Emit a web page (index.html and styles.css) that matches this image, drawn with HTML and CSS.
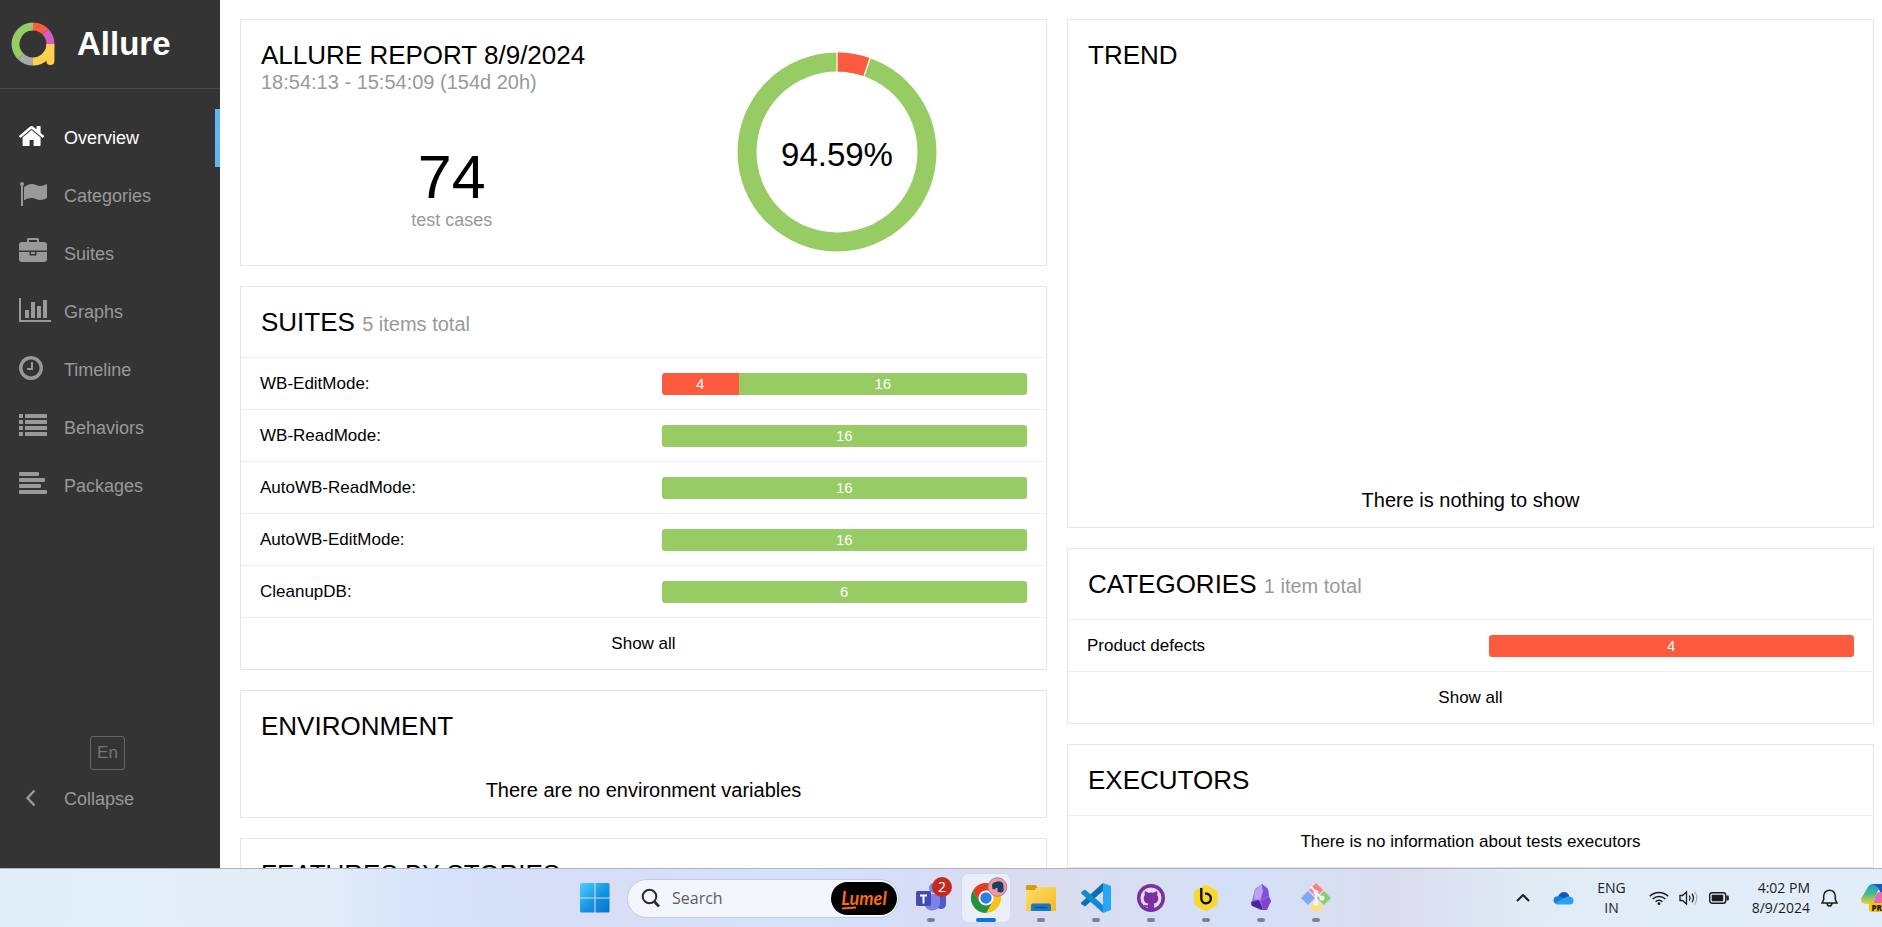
FILE: index.html
```html
<!DOCTYPE html>
<html lang="en">
<head>
<meta charset="utf-8">
<title>Allure Report</title>
<link rel="stylesheet" href="styles.css">
</head>
<body>
<div class="app">
  <aside class="side">
    <div class="brand">
      <svg class="brand-logo" viewBox="0 0 44 44" fill="none" stroke-width="8">
        <path d="M9.7 34.3A17.4 17.4 0 0 1 22 4.600" stroke="#97cc64"/>
        <path d="M22 4.600A17.400 17.400 0 0 1 34.300 9.700" stroke="#fd5a3e"/>
        <path d="M34.300 9.700A17.400 17.400 0 0 1 39.400 22" stroke="#d35ebe"/>
        <path d="M22 39.400A17.400 17.400 0 0 1 9.700 34.300" stroke="#aaa"/>
        <path d="M39.400 22A17.400 17.400 0 0 1 22 39.400" stroke="#ffd050"/>
        <path d="M35.400 22h8v17a4 4 0 0 1-8 0z" fill="#ffd050" stroke="none"/>
      </svg>
      <span class="brand-name">Allure</span>
    </div>
    <nav class="nav">
      <a class="nav-item nav-item-active" href="#">
        <svg class="nav-icon" viewBox="90 0 1792 2048"><path d="M1472 992v480q0 26-19 45t-45 19h-384v-384h-256v384h-384q-26 0-45-19t-19-45v-480q0-1 .5-3t.5-3l575-474 575 474q1 2 1 6zm223-69l-62 74q-8 9-21 11h-3q-13 0-21-7l-692-577-692 577q-12 8-24 7-13-2-21-11l-62-74q-8-10-7-23.500t11-21.500l719-599q32-26 76-26t76 26l244 204v-195q0-14 9-23t23-9h192q14 0 23 9t9 23v408l219 182q10 8 11 21.500t-7 23.500z"/></svg>
        <span>Overview</span></a>
      <a class="nav-item" href="#">
        <svg class="nav-icon" viewBox="0 0 28 32"><circle cx="3" cy="4" r="2"/><path d="M2 4h2v22H2zM5 7c3-2 5-3 8-3s5 2 8 2 4.500-.8 6-1.700c.6-.3 1-.1 1 .5V18c-2 1.300-4 2-7 2s-5-2-8-2-5 .8-8 2.300z"/></svg>
        <span>Categories</span></a>
      <a class="nav-item" href="#">
        <svg class="nav-icon" viewBox="0 0 1792 2048"><path d="M640 256h512v-128h-512v128zm1152 640v480q0 66-47 113t-113 47h-1472q-66 0-113-47t-47-113v-480h672v160q0 26 19 45t45 19h320q26 0 45-19t19-45v-160h672zm-768 0v128h-256v-128h256zm768-480v384h-1792v-384q0-66 47-113t113-47h352v-160q0-40 28-68t68-28h576q40 0 68 28t28 68v160h352q66 0 113 47t47 113z"/></svg>
        <span>Suites</span></a>
      <a class="nav-item" href="#">
        <svg class="nav-icon" viewBox="0 0 28 32"><path d="M0 2h2v22h30v2H0zM6 14h4v8H6zM12 6h4v16h-4zM18 10h4v12h-4zM24 4h4v18h-4z"/></svg>
        <span>Graphs</span></a>
      <a class="nav-item" href="#">
        <svg class="nav-icon" viewBox="128 0 1792 2048"><path d="M1024 544v448q0 14-9 23t-23 9h-320q-14 0-23-9t-9-23v-64q0-14 9-23t23-9h224v-352q0-14 9-23t23-9h64q14 0 23 9t9 23zm416 352q0-148-73-273t-198-198-273-73-273 73-198 198-73 273 73 273 198 198 273 73 273-73 198-198 73-273zm224 0q0 209-103 385.500t-279.500 279.500-385.500 103-385.500-103-279.500-279.500-103-385.500 103-385.500 279.500-279.500 385.500-103 385.500 103 279.500 279.500 103 385.500z"/></svg>
        <span>Timeline</span></a>
      <a class="nav-item" href="#">
        <svg class="nav-icon" viewBox="0 0 28 32"><path d="M0 2h4v4H0zM6 2h22v4H6zM0 8h4v4H0zM6 8h22v4H6zM0 14h4v4H0zM6 14h22v4H6zM0 20h4v4H0zM6 20h22v4H6z"/></svg>
        <span>Behaviors</span></a>
      <a class="nav-item" href="#">
        <svg class="nav-icon" viewBox="0 0 28 32"><rect y="2" width="20" height="4" rx="1"/><rect y="8" width="26" height="4" rx="1"/><rect y="14" width="22" height="4" rx="1"/><rect y="20" width="28" height="4" rx="1"/></svg>
        <span>Packages</span></a>
    </nav>
    <div class="side-foot">
      <button class="lang" type="button">En</button>
      <button class="nav-item collapse" type="button">
        <svg class="nav-icon" viewBox="0 0 28 32" fill="none" stroke="currentColor" stroke-width="2.400"><path d="M15.500 7.500L8.500 15l7 7.500"/></svg>
        <span>Collapse</span></button>
    </div>
  </aside>

  <main class="board">
    <div class="col">
      <section class="card summary">
        <div class="summary-left">
          <h2 class="summary-title">ALLURE REPORT 8/9/2024</h2>
          <div class="summary-time">18:54:13 - 15:54:09 (154d 20h)</div>
          <div class="count">74</div>
          <div class="count-label">test cases</div>
        </div>
        <div class="summary-chart">
          <svg class="donut" viewBox="0 0 200 200" role="img" aria-label="94.59% passed">
            <circle cx="100" cy="100" r="90" fill="none" stroke="#97cc64" stroke-width="19"/>
            <path d="M100 10A90 90 0 0 1 130 15.150" fill="none" stroke="#fd5a3e" stroke-width="19"/>
            <path d="M100 20V0M126.500 25.200L133.500 5" stroke="#fff" stroke-width="1.200"/>
            <text class="donut-text" x="100" y="114" text-anchor="middle">94.59%</text>
          </svg>
        </div>
      </section>

      <section class="card">
        <h2 class="card-title">SUITES <small class="card-sub">5 items total</small></h2>
        <a class="row" href="#"><span>WB-EditMode:</span><span class="bar"><span class="seg seg-failed" style="flex-grow:77">4</span><span class="seg" style="flex-grow:288">16</span></span></a>
        <a class="row" href="#"><span>WB-ReadMode:</span><span class="bar"><span class="seg">16</span></span></a>
        <a class="row" href="#"><span>AutoWB-ReadMode:</span><span class="bar"><span class="seg">16</span></span></a>
        <a class="row" href="#"><span>AutoWB-EditMode:</span><span class="bar"><span class="seg">16</span></span></a>
        <a class="row" href="#"><span>CleanupDB:</span><span class="bar"><span class="seg">6</span></span></a>
        <a class="row row-center" href="#">Show all</a>
      </section>

      <section class="card">
        <h2 class="card-title">ENVIRONMENT</h2>
        <p class="note">There are no environment variables</p>
      </section>

      <section class="card">
        <h2 class="card-title">FEATURES BY STORIES</h2>
      </section>
    </div>

    <div class="col">
      <section class="card">
        <h2 class="card-title">TREND</h2>
        <div class="trend-plot"></div>
        <p class="note">There is nothing to show</p>
      </section>

      <section class="card">
        <h2 class="card-title">CATEGORIES <small class="card-sub">1 item total</small></h2>
        <a class="row" href="#"><span>Product defects</span><span class="bar"><span class="seg seg-failed">4</span></span></a>
        <a class="row row-center" href="#">Show all</a>
      </section>

      <section class="card">
        <h2 class="card-title">EXECUTORS</h2>
        <p class="row row-center">There is no information about tests executors</p>
      </section>
    </div>
  </main>
</div>

<footer class="taskbar">
  <div class="dock">
    <button class="start" type="button" aria-label="Start">
      <svg class="start-icon" viewBox="0 0 30 30">
        <defs><linearGradient id="win" x1="0" y1="0" x2="30" y2="30" gradientUnits="userSpaceOnUse"><stop stop-color="#4cd2ff"/><stop offset=".55" stop-color="#1492dd"/><stop offset="1" stop-color="#0072d2"/></linearGradient></defs>
        <path fill="url(#win)" d="M1.500 0H14.500V14.500H0V1.500Q0 0 1.500 0zM15.500 0h12.500Q29.500 0 29.500 1.500V14.500h-14zM0 15.500h14.500v14H1.500Q0 29.500 0 28zM15.500 15.500h14V28q0 1.500-1.500 1.500H15.500z"/>
      </svg>
    </button>
    <label class="search">
      <svg class="search-icon" viewBox="0 0 20 20" fill="none" stroke="#2b2b2b" stroke-width="2"><circle cx="8.500" cy="8.500" r="6.800"/><path d="M13.300 13.500l4.700 5" stroke-width="2.600"/></svg>
      <input class="search-box" type="text" placeholder="Search" aria-label="Search">
      <span class="lumel"><span>Lumel</span><svg class="lumel-line" viewBox="0 0 16 4"><path d="M1 2.500L15 1.500" stroke="#ff6a13" stroke-width="2"/></svg></span>
    </label>
    <div class="apps">
      <button class="tile" type="button" aria-label="Teams">
        <svg class="tile-icon" viewBox="0 0 36 36">
          <circle cx="21" cy="8" r="5" fill="#7b83eb"/><circle cx="29" cy="10" r="3.500" fill="#5059c9"/>
          <path d="M24 14h9v10a5 5 0 0 1-9 3z" fill="#5059c9"/>
          <path d="M12 14h15v10a8 8 0 0 1-15 2z" fill="#7b83eb"/>
          <rect x="3" y="11" width="15" height="15" rx="1.500" fill="#444cb0"/>
          <path d="M7 14.500h7v2h-2.500v7h-2v-7H7z" fill="#fff"/>
        </svg>
        <span class="badge">2</span>
      </button>
      <button class="tile tile-active" type="button" aria-label="Chrome">
        <svg class="tile-icon" viewBox="0 0 36 36">
          <circle cx="18" cy="18" r="15" fill="#fbc116"/>
          <path d="M18 18L5 10.500A15 15 0 0 1 31 10.500H18z" fill="#e33b2e"/>
          <path d="M18 10.500L5 10.500l6.500 11z" fill="#e33b2e"/>
          <path d="M5 10.500A15 15 0 0 0 18 33l6.500-11.200L18 18l-6.500 3.700z" fill="#229342"/>
          <circle cx="18" cy="18" r="7.500" fill="#fff"/><circle cx="18" cy="18" r="5.700" fill="#2f7de9"/>
          <circle cx="29.500" cy="7" r="9.300" fill="#f7979b" stroke="#8b8e95"/>
          <path d="M24 5q1-3 4-3 1-1 4-.5 3.500.5 3.500 4.500v5l-2 1.500-4-.5V8h-2v1.500l-3-.5z" fill="#173e63"/>
        </svg>
      </button>
      <button class="tile" type="button" aria-label="File Explorer">
        <svg class="tile-icon" viewBox="0 0 36 36">
          <defs><linearGradient id="fold" x2="1" y2="1"><stop stop-color="#ffdf70"/><stop offset="1" stop-color="#f7b81c"/></linearGradient></defs>
          <path d="M3 6.500Q3 5 4.500 5h8l3 3h-3v6H3z" fill="#d99a10"/>
          <path d="M3 10h9l3-3h16.500Q33 7 33 8.500V31H3z" fill="url(#fold)"/>
          <path d="M8 31v-5.500q0-2 2-2h16q2 0 2 2V31z" fill="#137bc8"/><path d="M12 27.500h12" stroke="#0a4f8f" stroke-width="1.500"/>
        </svg>
      </button>
      <button class="tile" type="button" aria-label="Visual Studio Code">
        <svg class="tile-icon" viewBox="0 0 36 36">
          <path d="M25 3l8 3v24l-8 3z" fill="#29a7f0"/>
          <path d="M25 3v8L7 26.500l-3.500-2.200q-1-1 0-2z" fill="#0a6fb5"/>
          <path d="M25 33v-8L7 9.500l-3.500 2.200q-1 1 0 2z" fill="#0f8ad4"/>
        </svg>
      </button>
      <button class="tile" type="button" aria-label="GitHub Desktop">
        <svg class="tile-icon" viewBox="0 0 36 36">
          <circle cx="18" cy="18" r="14" fill="#7a2fa3"/>
          <circle cx="18" cy="18" r="10.500" fill="#e4dcf4"/>
          <path d="M12 11l3.500 1.800q2.500-.6 5 0L24 11q.8 2.300.2 4 1.600 2 1 4.500-.8 3.700-4.700 4.200.8 1 .8 2.300v3h-6.600v-2q-3 .5-4-2.500 1.500 1 4 .8 0-1 .8-1.600-4-.5-4.700-4.200-.6-2.500 1-4.500-.6-1.700.2-4z" fill="#7a2fa3"/>
        </svg>
      </button>
      <button class="tile" type="button" aria-label="Beekeeper Studio">
        <svg class="tile-icon" viewBox="0 0 36 36">
          <path d="M15.500 5.700q2.500-1.300 5 0l7 4Q30 11.200 30 14v8q0 2.800-2.500 4.300l-7 4q-2.500 1.300-5 0l-7-4Q6 24.800 6 22v-8q0-2.800 2.500-4.300z" fill="#fbd62f"/>
          <path d="M13.300 8v10.500a4.800 4.800 0 1 0 3.700-4.700" fill="none" stroke="#111" stroke-width="2.400"/>
        </svg>
      </button>
      <button class="tile" type="button" aria-label="Obsidian">
        <svg class="tile-icon" viewBox="0 0 36 36">
          <path d="M19 4l6 5 1 7 2 5-4 7-7 2-9-5 2-8 2-8z" fill="#9a6be8"/>
          <path d="M19 4l-7 6-1 9 6 1 3-9z" fill="#bda0f4"/>
          <path d="M19 4l6 5 1 7-8 4 2-8z" fill="#8350da"/>
          <path d="M8 22l8-2 4 10-11-4z" fill="#4d2496"/>
          <path d="M18 21l8-4 2 4-4 9-4 0z" fill="#7a45d2"/>
        </svg>
      </button>
      <button class="tile" type="button" aria-label="Git">
        <svg class="tile-icon" viewBox="0 0 36 36">
          <path d="M18 3l7 7-7 7-7-7z" fill="#ff7e7e"/><path d="M10 11l7 7-7 7-7-7z" fill="#7fa9f7"/>
          <path d="M26 11l7 7-7 7-7-7z" fill="#87cf63"/><path d="M18 19l7 7-7 7-7-7z" fill="#fbe07b"/>
          <path d="M13 7l5 5v11M18 13l6 5" fill="none" stroke="#f3f3f8" stroke-width="2.200"/>
          <circle cx="18" cy="12.500" r="2.500" fill="#f3f3f8"/><circle cx="18" cy="23" r="2.700" fill="#f3f3f8"/><circle cx="24" cy="18" r="2.600" fill="#f3f3f8"/>
        </svg>
      </button>
    </div>
  </div>

  <div class="tray">
    <svg class="ico-chev" viewBox="0 0 14 8" fill="none" stroke="#1c1c1c" stroke-width="2"><path d="M1 7l6-6 6 6"/></svg>
    <svg class="ico-cloud" viewBox="0 0 21 14"><path d="M5 5.500Q7 1 11 1q4 0 5.500 4.500L10 9z" fill="#0a5cb8"/><path d="M4 13q-3.500-.5-3.500-4T5 5.200q2-.3 4 1L15 10l-8 3z" fill="#1180d8"/><path d="M9 8l6-2.500q5.500 0 5.500 4T17 13.500H4.500q-1.500 0-2.500-1z" fill="#28a4ec"/></svg>
    <div class="tray-lang">ENG<br>IN</div>
    <div class="tray-sys">
      <svg class="ico-sys" viewBox="0 0 20 16" fill="none" stroke="#1c1c1c" stroke-width="1.500"><path d="M.8 6.200a13 13 0 0 1 18.400 0M3.700 9a9 9 0 0 1 12.600 0M6.600 11.700a5 5 0 0 1 6.800 0"/><circle cx="10" cy="13.700" r="1.400" fill="#1c1c1c" stroke="none"/></svg>
      <svg class="ico-sys" viewBox="0 0 20 16" fill="none" stroke="#1c1c1c" stroke-width="1.300"><path d="M1 5.500h2.500L7.500 2v12l-4-3.500H1z"/><path d="M10.300 5.500q1.500 2.500 0 5M13 3.700q2.800 4.300 0 8.600"/><path d="M15.700 1.500q4.200 6.500 0 13" stroke="#a8b0ba"/></svg>
      <svg class="ico-sys" viewBox="0 0 20 16"><rect x=".7" y="2.700" width="16" height="10.600" rx="2.500" fill="none" stroke="#1c1c1c" stroke-width="1.400"/><rect x="2.700" y="4.700" width="11.500" height="6.600" rx="1" fill="#1c1c1c"/><path d="M17.500 5.500h1q1.300 0 1.300 1.300v2.400q0 1.300-1.300 1.300h-1z" fill="#1c1c1c"/></svg>
    </div>
    <div class="tray-clock">
      <div class="clock">4:02 PM<br>8/9/2024</div>
      <svg class="ico-bell" viewBox="0 0 17 18" fill="none" stroke="#1c1c1c" stroke-width="1.500"><path d="M1 14l1.700-3.500V7a5.800 5.800 0 0 1 11.600 0v3.500L16 14zM6 14.500q.5 2.500 2.500 2.500t2.500-2.500"/></svg>
    </div>
    <div class="copilot">
      <svg class="ico-copilot" viewBox="0 0 21 28">
        <defs><linearGradient id="cpa" x1="0" y1="0" x2="0" y2="1"><stop stop-color="#1897d9"/><stop offset=".5" stop-color="#4dbb8d"/><stop offset="1" stop-color="#f2cf2e"/></linearGradient></defs>
        <path d="M7 3q1.500-3 5-3h9v3q-4 2-5.500 7L13 17q-1 3-4 3H4q-5-1-3.500-6z" fill="url(#cpa)"/>
        <path d="M12 0h9v8h-2q-1-5-7-8z" fill="#1b57c9"/><path d="M12 20l3-9q1-3 4-3h2v12z" fill="#e66bb0"/>
      </svg>
      <span class="pre">PR</span>
    </div>
  </div>
</footer>
</body>
</html>
```
FILE: styles.css
```css
* { box-sizing: border-box; }
body {
  margin: 0;
  height: 100vh;
  display: flex;
  flex-direction: column;
  overflow: hidden;
  background: #fff;
  color: #000;
  font: 17px/24px "Liberation Sans", Arial, sans-serif;
}
a { color: inherit; text-decoration: none; }
h2, p { margin: 0; font-weight: 400; }
button { border: 0; padding: 0; background: none; font: inherit; color: inherit; }

.app { flex: 1; min-height: 0; display: flex; overflow: hidden; }

/* Sidebar */
.side {
  flex: 0 0 220px;
  display: flex;
  flex-direction: column;
  background: #343434;
  color: #999;
}
.brand {
  display: flex;
  align-items: center;
  gap: 22px;
  height: 89px;
  padding-left: 11px;
  border-bottom: 1px solid #4d4d4d;
}
.brand-logo { width: 44px; height: 44px; }
.brand-name { color: #fff; font-size: 33px; line-height: 40px; font-weight: 700; }
.nav { padding-top: 20px; }
.nav-item {
  display: flex;
  align-items: center;
  gap: 17px;
  width: 100%;
  height: 58px;
  padding-left: 19px;
  border-right: 5px solid transparent;
  font-size: 18px;
}
.nav-item-active { color: #fff; border-right-color: #64b5f6; }
.nav-icon { width: 28px; height: 32px; fill: currentColor; overflow: visible; }
.side-foot {
  margin-top: auto;
  padding-bottom: 40px;
  display: flex;
  flex-direction: column;
}
.lang {
  align-self: center;
  width: 35px;
  height: 34px;
  margin-right: 5px;
  border: 1px solid #666;
  border-radius: 3px;
  color: #777;
  font-size: 17px;
}
.collapse .nav-icon { fill: none; }

/* Dashboard */
.board {
  flex: 1;
  display: grid;
  grid-template-columns: 1fr 1fr;
  align-items: start;
  gap: 20px;
  padding: 19px 8px 0 20px;
}
.col { display: flex; flex-direction: column; gap: 20px; }
.card { border: 1px solid #e5e5e5; background: #fff; }
.card-title { padding: 20px 20px 19px; font-size: 26px; line-height: 31px; }
.card-sub { color: #999; font-size: 20px; line-height: 20px; }
.row {
  display: grid;
  grid-template-columns: 1fr 1fr;
  align-items: center;
  gap: 36px;
  height: 52px;
  padding: 0 19px;
  border-top: 1px solid #eceff1;
}
.row-center { grid-template-columns: 1fr; text-align: center; }
.bar {
  display: flex;
  height: 22px;
  border-radius: 3px;
  overflow: hidden;
  color: #fff;
  font-size: 15px;
  line-height: 22px;
  text-align: center;
}
.seg { flex: 1 0 0; background: #97cc64; }
.seg-failed { background: #fd5a3e; }
.note { padding: 17px 20px 15px; font-size: 20px; text-align: center; }
.trend-plot { height: 381px; }

.summary { display: grid; grid-template-columns: 1fr 1fr; padding: 0 16px 0 18px; }
.summary-title { padding: 20px 0 0 2px; font-size: 26px; line-height: 30px; }
.summary-time { padding-left: 2px; color: #999; font-size: 20px; }
.count { margin-top: 53px; font-size: 61px; line-height: 61px; text-align: center; }
.count-label { color: #999; font-size: 18px; text-align: center; }
.summary-chart { display: flex; justify-content: center; padding: 32px 0 13px; }
.donut { width: 200px; height: 200px; }
.donut-text { font-size: 33px; }

/* Taskbar */
.taskbar {
  display: grid;
  grid-template-columns: 1fr auto 1fr;
  align-items: center;
  height: 59px;
  padding-left: 38px;
  border-top: 1px solid #adb4c2;
  background: linear-gradient(90deg, #e1eefa 0, #e3edf8 17%, #d4e2fa 24%, #d7ddf5 32%, #d4e3fb 42%, #d6ddf6 49%, #dadcee 55%, #d4e0f8 66%, #dadcee 74%, #e0ebf6 81%, #e1eef9 100%);
  color: #1c1c1c;
  font: 14px/20px "Open Sans", "Noto Sans", sans-serif;
}
.dock { grid-column: 2; display: flex; align-items: center; }
.start { margin-right: 17px; }
.start-icon { display: block; width: 30px; height: 30px; }
.search {
  display: flex;
  align-items: center;
  width: 272px;
  height: 39px;
  margin-right: 8px;
  padding: 0 1px 0 13px;
  border: 1px solid #c3cbe0;
  border-radius: 20px;
  background: #f3f6fd;
}
.search-icon { flex: none; width: 20px; height: 20px; }
.search-box {
  flex: 1;
  min-width: 0;
  padding: 0 0 0 11px;
  border: 0;
  background: none;
  font: 16px/24px "Open Sans", "Noto Sans", sans-serif;
}
.search-box::placeholder { color: #5b5d62; opacity: 1; }
.lumel {
  position: relative;
  width: 66px;
  height: 33px;
  border-radius: 17px;
  background: #000;
  color: #ff6a13;
  font: italic 700 18px/32px Lato, sans-serif;
  text-align: center;
}
.lumel-line { position: absolute; left: 10px; bottom: 5px; width: 16px; height: 4px; }
.apps { display: flex; gap: 7px; }
.tile {
  position: relative;
  display: flex;
  align-items: center;
  justify-content: center;
  width: 48px;
  height: 48px;
  border-radius: 5px;
}
.tile::after {
  content: "";
  position: absolute;
  left: 20px;
  bottom: 0;
  width: 8px;
  height: 4px;
  border-radius: 2px;
  background: #7c8292;
}
.tile-active { background: #eaeef9; box-shadow: 0 0 1px #b5bbcd; }
.tile-active::after { left: 14px; width: 20px; background: #0b76d6; }
.tile-icon { width: 36px; height: 36px; overflow: visible; }
.badge {
  position: absolute;
  top: 3px;
  right: 3px;
  width: 20px;
  height: 20px;
  border-radius: 10px;
  background: #c42b1c;
  color: #fff;
  text-align: center;
}
.tray { justify-self: end; display: flex; align-items: center; gap: 23px; text-align: center; }
.tray-sys { display: flex; gap: 10px; }
.tray-clock { display: flex; align-items: center; gap: 11px; text-align: right; }
.ico-chev { width: 14px; height: 8px; }
.ico-cloud { width: 21px; height: 14px; }
.ico-sys { width: 20px; height: 16px; }
.ico-bell { width: 17px; height: 18px; }
.copilot { position: relative; width: 21px; height: 28px; }
.ico-copilot { display: block; width: 21px; height: 28px; }
.pre {
  position: absolute;
  right: 0;
  bottom: 0;
  padding-left: 3px;
  border-radius: 2px 0 0 2px;
  background: #fcc30b;
  font-size: 8px;
  line-height: 9px;
  font-weight: 800;
}
```
